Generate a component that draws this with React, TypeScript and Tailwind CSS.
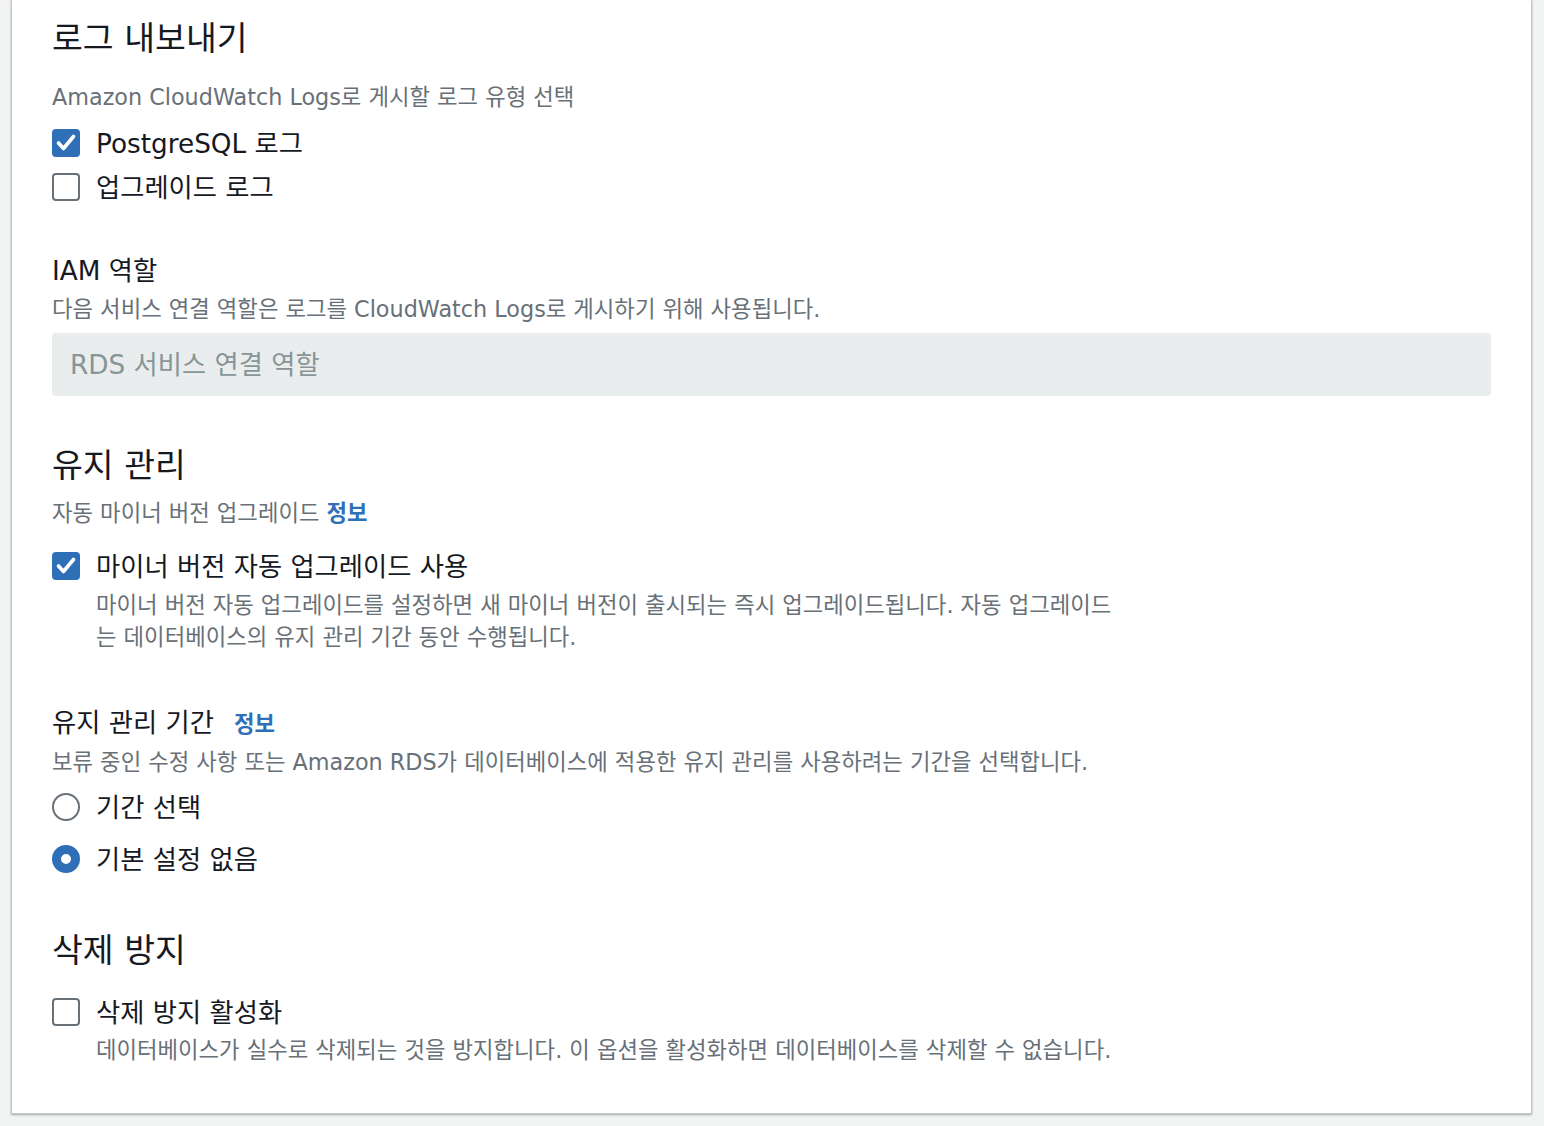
const font = { fontFamily: '"DejaVu Sans", "Noto Sans CJK KR", sans-serif' };

function Checkbox({ checked }: { checked: boolean }) {
  if (checked) {
    return (
      <span className="flex h-[28px] w-[28px] shrink-0 rounded-[4px] bg-[#2f6fb8]">
        <svg width="28" height="28" viewBox="0 0 28 28" fill="none">
          <path d="M6.5 14 L11.5 19.5 L21.5 7.5" stroke="white" strokeWidth="3.6" strokeLinecap="round" strokeLinejoin="round" />
        </svg>
      </span>
    );
  }
  return <span className="h-[28px] w-[28px] shrink-0 rounded-[4px] border-2 border-[#687078] bg-white" />;
}

function Radio({ checked }: { checked: boolean }) {
  return checked ? (
    <span className="h-[28px] w-[28px] shrink-0 rounded-full border-[9px] border-[#2f6fb8] bg-white" />
  ) : (
    <span className="h-[28px] w-[28px] shrink-0 rounded-full border-2 border-[#687078] bg-white" />
  );
}

function Heading({ children, className }: { children: React.ReactNode; className?: string }) {
  return <h2 className={"pt-[2px] text-[33.5px] leading-[42px] text-[#16191f] " + (className ?? "")}>{children}</h2>;
}

function Desc({ children, className }: { children: React.ReactNode; className?: string }) {
  return <p className={"text-[22.3px] leading-[32px] text-[#687078] " + (className ?? "")}>{children}</p>;
}

function Info() {
  return <span className="font-bold text-[#2f6fb8]">정보</span>;
}

function Row({ children, className }: { children: React.ReactNode; className?: string }) {
  return (
    <label className={"flex items-center gap-[16px] text-[26.3px] text-[#16191f] " + (className ?? "h-[44px]")}>
      {children}
    </label>
  );
}

export default function App() {
  return (
    <div className="min-h-[1126px] bg-[#f2f3f3]" style={font}>
      <div className="ml-[11px] w-[1521px] border-x border-b border-[#c4c7c9] bg-white px-[40px] pt-[16px] pb-[47px] shadow-[0_1px_2px_rgba(0,28,36,0.35)]">
        <Heading>로그 내보내기</Heading>
        <Desc className="mt-[21px]">Amazon CloudWatch Logs로 게시할 로그 유형 선택</Desc>
        <div className="mt-[8px] flex flex-col">
          <Row>
            <Checkbox checked />
            <span className="pt-[3px]">PostgreSQL 로그</span>
          </Row>
          <Row>
            <Checkbox checked={false} />
            <span className="pt-[3px]">업그레이드 로그</span>
          </Row>
        </div>

        <div className="mt-[43px] pt-[2px] text-[26.3px] leading-[34px] text-[#16191f]">IAM 역할</div>
        <Desc className="mt-[5px]">다음 서비스 연결 역할은 로그를 CloudWatch Logs로 게시하기 위해 사용됩니다.</Desc>
        <div className="mt-[8px] flex h-[63px] items-center rounded-[4px] bg-[#eaeded] px-[18px] pt-[2px] text-[26.3px] text-[#879596]">
          RDS 서비스 연결 역할
        </div>

        <Heading className="mt-[47px]">유지 관리</Heading>
        <Desc className="mt-[10px]">
          자동 마이너 버전 업그레이드 <Info />
        </Desc>
        <Row className="mt-[19px] h-[36px]">
          <Checkbox checked />
          <span className="pt-[3px]">마이너 버전 자동 업그레이드 사용</span>
        </Row>
        <Desc className="mt-[5px] pl-[44px]">
          <span className="whitespace-nowrap">
            마이너 버전 자동 업그레이드를 설정하면 새 마이너 버전이 출시되는 즉시 업그레이드됩니다. 자동 업그레이드
          </span>
          <br />
          <span className="whitespace-nowrap">는 데이터베이스의 유지 관리 기간 동안 수행됩니다.</span>
        </Desc>

        <div className="mt-[51px] flex items-baseline gap-[20px] pt-[2px] text-[26.3px] leading-[34px] text-[#16191f]">
          <span>유지 관리 기간</span>
          <span className="text-[22.3px]">
            <Info />
          </span>
        </div>
        <Desc className="mt-[5px]">
          보류 중인 수정 사항 또는 Amazon RDS가 데이터베이스에 적용한 유지 관리를 사용하려는 기간을 선택합니다.
        </Desc>
        <div className="mt-[7px] flex flex-col gap-[8px]">
          <Row>
            <Radio checked={false} />
            <span className="pt-[3px]">기간 선택</span>
          </Row>
          <Row>
            <Radio checked />
            <span className="pt-[3px]">기본 설정 없음</span>
          </Row>
        </div>

        <Heading className="mt-[47px]">삭제 방지</Heading>
        <Row className="mt-[22px] h-[36px]">
          <Checkbox checked={false} />
          <span className="pt-[3px]">삭제 방지 활성화</span>
        </Row>
        <Desc className="mt-[4px] pl-[44px]">
          데이터베이스가 실수로 삭제되는 것을 방지합니다. 이 옵션을 활성화하면 데이터베이스를 삭제할 수 없습니다.
        </Desc>
      </div>
    </div>
  );
}
